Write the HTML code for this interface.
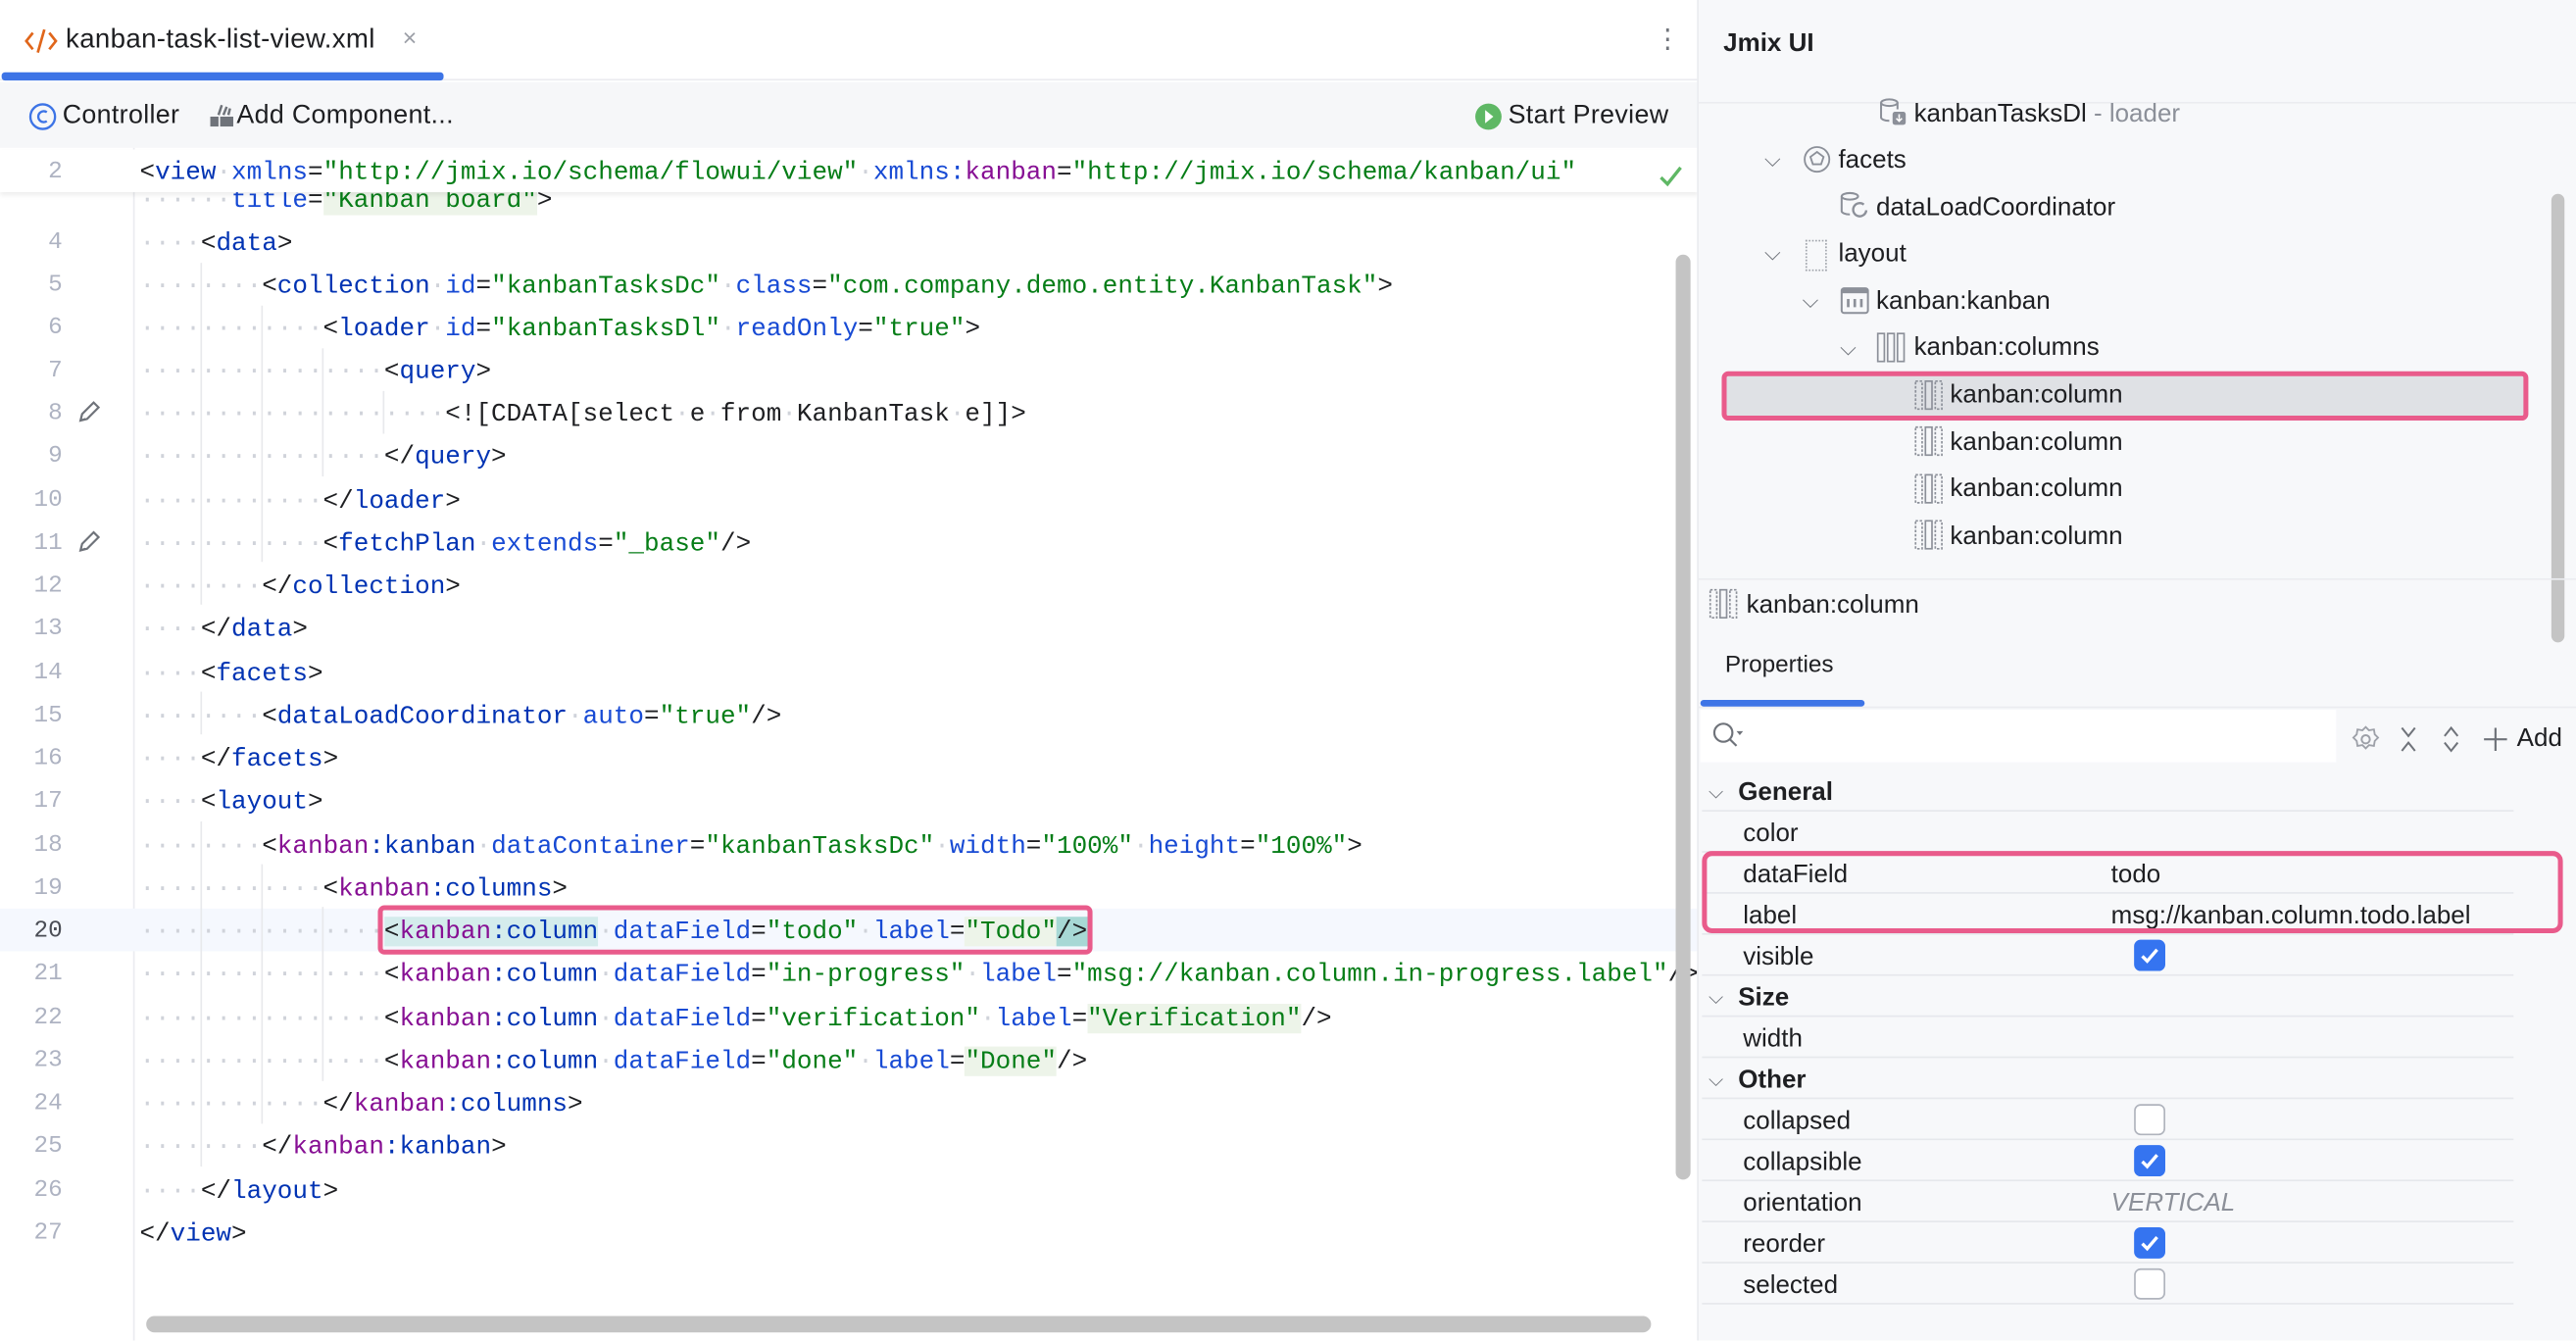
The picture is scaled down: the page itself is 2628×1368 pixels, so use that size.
<!DOCTYPE html>
<html><head><meta charset="utf-8">
<style>
*{box-sizing:border-box;margin:0;padding:0}
html,body{width:2628px;height:1368px;overflow:hidden;background:#fff}
#w{position:absolute;left:0;top:0;width:1568px;height:816px;transform:scale(1.67602);transform-origin:0 0;font-family:"Liberation Sans",sans-serif;color:#1e1f22;background:#fff;overflow:hidden}
.abs{position:absolute}
.code{position:absolute;left:85px;margin-top:2px;font-family:"Liberation Mono",monospace;font-size:15.5px;white-space:pre;line-height:26px;height:26px}
.ln{position:absolute;width:38px;text-align:right;left:0;margin-top:2px;font-family:"Liberation Mono",monospace;font-size:14.5px;color:#aeb3c2;line-height:26px}
.t{color:#0033b3}.a{color:#174ad4}.v{color:#067d17}.n{color:#871094}.d{color:#d0d3da}.k{color:#1e1f22}
.tr{position:absolute;font-size:15.5px;line-height:20px;color:#1e1f22;margin-top:1px}
.pr{position:absolute;left:1036px;width:494px;height:25px;border-bottom:1px solid #e6e8ec;font-size:15.5px;line-height:24px}
.pr .l{position:absolute;left:25px;top:2px}
.pr .r{position:absolute;left:249px;top:2px}
.cb{position:absolute;left:263px;top:3px;width:19px;height:19px;border-radius:4px;border:1px solid #b0b4bd;background:#fff}
.cb.on{background:#3574f0;border-color:#3574f0}
.grp{font-weight:bold}
.chev{position:absolute;left:4px;top:1px;color:#6f737a;font-size:12px}
.guide{position:absolute;width:1px;background:#e8e9ec}
</style></head><body><div id="w">

<!-- Tab bar -->
<div class="abs" style="left:0;top:0;width:1034px;height:49px;background:#fff;border-bottom:1px solid #ebecf0"></div>
<svg class="abs" style="left:14px;top:16px" width="22" height="18" viewBox="0 0 22 18"><path d="M6 4L2 9l4 5M16 4l4 5-4 5M13 2L9 16" fill="none" stroke="#e0661b" stroke-width="1.6"/></svg>
<div class="abs" style="left:40px;top:15px;font-size:16.5px;letter-spacing:0.2px">kanban-task-list-view.xml</div>
<div class="abs" style="left:245px;top:15px;font-size:15px;color:#9da0a8">×</div>
<div class="abs" style="left:1007px;top:14px;font-size:16px;color:#6f737a">⋮</div>
<div class="abs" style="left:1px;top:44px;width:269px;height:5px;background:#3d74e6;border-radius:2px"></div>

<!-- Toolbar -->
<div class="abs" style="left:0;top:50px;width:1034px;height:40px;background:#f6f7f9"></div>
<svg class="abs" style="left:17px;top:62px" width="18" height="18" viewBox="0 0 18 18"><circle cx="9" cy="9" r="7.5" fill="none" stroke="#3d74e6" stroke-width="1.4"/><path d="M11.5 6.3A3.3 3.3 0 1 0 11.5 11.7" fill="none" stroke="#3d74e6" stroke-width="1.4"/></svg>
<div class="abs" style="left:38px;top:62px;font-size:16px;letter-spacing:0.2px">Controller</div>
<svg class="abs" style="left:127px;top:62px" width="16" height="16" viewBox="0 0 16 16"><rect x="1" y="9" width="5" height="6" fill="#6f737a"/><rect x="7" y="9" width="8" height="6" fill="#6f737a"/><path d="M6 8l2-6M9 8l2-5M12 8l1-4" stroke="#6f737a" stroke-width="1.5"/></svg>
<div class="abs" style="left:144px;top:62px;font-size:16px;letter-spacing:0.2px">Add Component...</div>
<svg class="abs" style="left:897px;top:62px" width="18" height="18" viewBox="0 0 18 18"><circle cx="9" cy="9" r="8" fill="#5fb865"/><path d="M7 5l5 4-5 4z" fill="#fff"/></svg>
<div class="abs" style="left:918px;top:62px;font-size:16px;letter-spacing:0.2px">Start Preview</div>

<!-- Gutter -->
<div class="abs" style="left:81px;top:90px;width:1px;height:726px;background:#ebecf0"></div>
<div class="abs" style="left:0;top:553px;width:1034px;height:26px;background:#f5f8fe"></div>

<!-- indent guides -->
<div class="guide" style="left:122px;top:160px;height:208px"></div>
<div class="guide" style="left:159px;top:186px;height:156px"></div>
<div class="guide" style="left:196px;top:212px;height:78px"></div>
<div class="guide" style="left:233px;top:238px;height:26px"></div>
<div class="guide" style="left:122px;top:421px;height:26px"></div>
<div class="guide" style="left:122px;top:500px;height:210px"></div>
<div class="guide" style="left:159px;top:526px;height:158px"></div>
<div class="guide" style="left:196px;top:552px;height:106px"></div>

<!-- line numbers -->
<div class="ln" style="top:133px">4</div>
<div class="ln" style="top:159px">5</div>
<div class="ln" style="top:185px">6</div>
<div class="ln" style="top:211px">7</div>
<div class="ln" style="top:237px">8</div>
<div class="ln" style="top:263px">9</div>
<div class="ln" style="top:290px">10</div>
<div class="ln" style="top:316px">11</div>
<div class="ln" style="top:342px">12</div>
<div class="ln" style="top:368px">13</div>
<div class="ln" style="top:395px">14</div>
<div class="ln" style="top:421px">15</div>
<div class="ln" style="top:447px">16</div>
<div class="ln" style="top:473px">17</div>
<div class="ln" style="top:500px">18</div>
<div class="ln" style="top:526px">19</div>
<div class="ln" style="top:552px;color:#4a4d55">20</div>
<div class="ln" style="top:578px">21</div>
<div class="ln" style="top:605px">22</div>
<div class="ln" style="top:631px">23</div>
<div class="ln" style="top:657px">24</div>
<div class="ln" style="top:683px">25</div>
<div class="ln" style="top:710px">26</div>
<div class="ln" style="top:736px">27</div>
<svg class="abs" style="left:46px;top:243px" width="16" height="16" viewBox="0 0 16 16"><path d="M3 13l1-4 7-7 3 3-7 7zM3 13l3-1" fill="none" stroke="#6f737a" stroke-width="1.3"/></svg>
<svg class="abs" style="left:46px;top:322px" width="16" height="16" viewBox="0 0 16 16"><path d="M3 13l1-4 7-7 3 3-7 7zM3 13l3-1" fill="none" stroke="#6f737a" stroke-width="1.3"/></svg>

<!-- code -->
<div class="code" style="top:107px"><span class="d">······</span><span class="a">title</span>=<span class="v" style="background:#edf4e9">"Kanban board"</span>&gt;</div>
<div class="code" style="top:133px"><span class="d">····</span>&lt;<span class="t">data</span>&gt;</div>
<div class="code" style="top:159px"><span class="d">········</span>&lt;<span class="t">collection</span><span class="d">·</span><span class="a">id</span>=<span class="v">"kanbanTasksDc"</span><span class="d">·</span><span class="a">class</span>=<span class="v">"com.company.demo.entity.KanbanTask"</span>&gt;</div>
<div class="code" style="top:185px"><span class="d">············</span>&lt;<span class="t">loader</span><span class="d">·</span><span class="a">id</span>=<span class="v">"kanbanTasksDl"</span><span class="d">·</span><span class="a">readOnly</span>=<span class="v">"true"</span>&gt;</div>
<div class="code" style="top:211px"><span class="d">················</span>&lt;<span class="t">query</span>&gt;</div>
<div class="code" style="top:237px"><span class="d">····················</span>&lt;![CDATA[select<span class="d">·</span>e<span class="d">·</span>from<span class="d">·</span>KanbanTask<span class="d">·</span>e]]&gt;</div>
<div class="code" style="top:263px"><span class="d">················</span>&lt;/<span class="t">query</span>&gt;</div>
<div class="code" style="top:290px"><span class="d">············</span>&lt;/<span class="t">loader</span>&gt;</div>
<div class="code" style="top:316px"><span class="d">············</span>&lt;<span class="t">fetchPlan</span><span class="d">·</span><span class="a">extends</span>=<span class="v">"_base"</span>/&gt;</div>
<div class="code" style="top:342px"><span class="d">········</span>&lt;/<span class="t">collection</span>&gt;</div>
<div class="code" style="top:368px"><span class="d">····</span>&lt;/<span class="t">data</span>&gt;</div>
<div class="code" style="top:395px"><span class="d">····</span>&lt;<span class="t">facets</span>&gt;</div>
<div class="code" style="top:421px"><span class="d">········</span>&lt;<span class="t">dataLoadCoordinator</span><span class="d">·</span><span class="a">auto</span>=<span class="v">"true"</span>/&gt;</div>
<div class="code" style="top:447px"><span class="d">····</span>&lt;/<span class="t">facets</span>&gt;</div>
<div class="code" style="top:473px"><span class="d">····</span>&lt;<span class="t">layout</span>&gt;</div>
<div class="code" style="top:500px"><span class="d">········</span>&lt;<span class="n">kanban</span><span class="t">:kanban</span><span class="d">·</span><span class="a">dataContainer</span>=<span class="v">"kanbanTasksDc"</span><span class="d">·</span><span class="a">width</span>=<span class="v">"100%"</span><span class="d">·</span><span class="a">height</span>=<span class="v">"100%"</span>&gt;</div>
<div class="code" style="top:526px"><span class="d">············</span>&lt;<span class="n">kanban</span><span class="t">:columns</span>&gt;</div>
<div class="code" style="top:552px"><span class="d">················</span><span style="background:#d4ecec">&lt;<span class="n">kanban</span><span class="t">:column</span></span><span class="d">·</span><span class="a">dataField</span>=<span class="v">"todo"</span><span class="d">·</span><span class="a">label</span>=<span class="v" style="background:#edf4e9">"Todo"</span><span style="background:#a7d8d5">/&gt;</span></div>
<div class="code" style="top:578px"><span class="d">················</span>&lt;<span class="n">kanban</span><span class="t">:column</span><span class="d">·</span><span class="a">dataField</span>=<span class="v">"in-progress"</span><span class="d">·</span><span class="a">label</span>=<span class="v">"msg://kanban.column.in-progress.label"</span>/&gt;</div>
<div class="code" style="top:605px"><span class="d">················</span>&lt;<span class="n">kanban</span><span class="t">:column</span><span class="d">·</span><span class="a">dataField</span>=<span class="v">"verification"</span><span class="d">·</span><span class="a">label</span>=<span class="v" style="background:#edf4e9">"Verification"</span>/&gt;</div>
<div class="code" style="top:631px"><span class="d">················</span>&lt;<span class="n">kanban</span><span class="t">:column</span><span class="d">·</span><span class="a">dataField</span>=<span class="v">"done"</span><span class="d">·</span><span class="a">label</span>=<span class="v" style="background:#edf4e9">"Done"</span>/&gt;</div>
<div class="code" style="top:657px"><span class="d">············</span>&lt;/<span class="n">kanban</span><span class="t">:columns</span>&gt;</div>
<div class="code" style="top:683px"><span class="d">········</span>&lt;/<span class="n">kanban</span><span class="t">:kanban</span>&gt;</div>
<div class="code" style="top:710px"><span class="d">····</span>&lt;/<span class="t">layout</span>&gt;</div>
<div class="code" style="top:736px">&lt;/<span class="t">view</span>&gt;</div>
<div class="abs" style="left:230px;top:551px;width:435px;height:30px;border:3px solid #e95b8b;border-radius:4px"></div>

<!-- sticky line 2 -->
<div class="abs" style="left:0;top:91px;width:1034px;height:26px;background:#fff;box-shadow:0 2px 3px rgba(0,0,0,0.08)"></div>
<div class="ln" style="top:90px">2</div>
<div class="code" style="top:90px">&lt;<span class="t">view</span><span class="d">·</span><span class="a">xmlns</span>=<span class="v">"http://jmix.io/schema/flowui/view"</span><span class="d">·</span><span class="a">xmlns:</span><span class="n">kanban</span>=<span class="v">"http://jmix.io/schema/kanban/ui"</span></div>
<svg class="abs" style="left:1009px;top:99px" width="16" height="16" viewBox="0 0 16 16"><path d="M2 9l4 4 8-10" fill="none" stroke="#5fb865" stroke-width="2"/></svg>

<!-- scrollbars -->
<div class="abs" style="left:1020px;top:155px;width:9px;height:563px;background:#c4c4c4;border-radius:5px"></div>
<div class="abs" style="left:89px;top:801px;width:916px;height:10px;background:#c4c4c4;border-radius:5px"></div>

<!-- Right panel -->
<div class="abs" style="left:1033px;top:0;width:535px;height:816px;background:#f7f8fa;border-left:1px solid #ebecf0"></div>
<div class="abs" style="left:1049px;top:18px;font-size:15.5px;font-weight:bold">Jmix UI</div>
<div class="abs" style="left:1034px;top:62px;width:534px;height:1px;background:#ebecf0"></div>

<div class="abs" style="left:1048px;top:226px;width:491px;height:30px;background:#dfe1e5;border:3px solid #e95b8b;border-radius:4px"></div>

<svg class="abs" style="left:1143px;top:59px" width="18" height="18" viewBox="0 0 18 18"><ellipse cx="7" cy="3.5" rx="5" ry="2" fill="none" stroke="#8c9099" stroke-width="1.2"/><path d="M2 3.5v9c0 1 2 2 5 2M12 3.5v4" fill="none" stroke="#8c9099" stroke-width="1.2"/><rect x="9" y="9" width="8" height="8" rx="1.5" fill="#8c9099"/><path d="M13 10.5v4M11.3 13l1.7 1.7 1.7-1.7" stroke="#fff" stroke-width="1"/></svg>
<div class="tr" style="left:1165px;top:59px">kanbanTasksDl <span style="color:#8c9099">- loader</span></div>
<div class="tr" style="left:1074px;top:86px;color:#6f737a;font-size:13px">⌵</div>
<svg class="abs" style="left:1097px;top:88px" width="18" height="18" viewBox="0 0 18 18"><circle cx="9" cy="9" r="7.5" fill="none" stroke="#8c9099" stroke-width="1.1"/><path d="M9 4.5l4 3-1.5 4.5h-5L5 7.5z" fill="none" stroke="#8c9099" stroke-width="1.1"/></svg>
<div class="tr" style="left:1119px;top:87px">facets</div>
<svg class="abs" style="left:1119px;top:116px" width="20" height="18" viewBox="0 0 20 18"><ellipse cx="7" cy="3.5" rx="5" ry="2" fill="none" stroke="#8c9099" stroke-width="1.2"/><path d="M2 3.5v9c0 1 2 2 5 2" fill="none" stroke="#8c9099" stroke-width="1.2"/><path d="M17 12a4 4 0 1 1-1.5-3.5" fill="none" stroke="#8c9099" stroke-width="1.4"/></svg>
<div class="tr" style="left:1142px;top:116px">dataLoadCoordinator</div>
<div class="tr" style="left:1074px;top:143px;color:#6f737a;font-size:13px">⌵</div>
<div class="abs" style="left:1099px;top:146px;width:13px;height:19px;border:1.5px dotted #a0a4ab"></div>
<div class="tr" style="left:1119px;top:144px">layout</div>
<div class="tr" style="left:1097px;top:172px;color:#6f737a;font-size:13px">⌵</div>
<svg class="abs" style="left:1120px;top:174px" width="18" height="18" viewBox="0 0 18 18"><rect x="1" y="1.5" width="16" height="15" rx="1.5" fill="none" stroke="#8c9099" stroke-width="1.2"/><rect x="1" y="1.5" width="16" height="3" fill="#8c9099"/><path d="M5 8v5M9 8v5M13 8v5" stroke="#8c9099" stroke-width="1.6"/></svg>
<div class="tr" style="left:1142px;top:173px">kanban:kanban</div>
<div class="tr" style="left:1120px;top:201px;color:#6f737a;font-size:13px">⌵</div>
<svg class="abs" style="left:1142px;top:202px" width="18" height="19" viewBox="0 0 18 19"><rect x="1" y="1" width="4" height="17" fill="none" stroke="#8c9099"/><rect x="7" y="1" width="4" height="17" fill="none" stroke="#8c9099"/><rect x="13" y="1" width="4" height="17" fill="none" stroke="#8c9099"/></svg>
<div class="tr" style="left:1165px;top:201px">kanban:columns</div>
<svg class="abs" style="left:1165px;top:231px" width="18" height="19" viewBox="0 0 18 19"><rect x="1" y="1" width="4" height="17" fill="none" stroke="#8c9099" stroke-dasharray="1.5 1"/><rect x="7" y="1" width="4" height="17" fill="none" stroke="#8c9099"/><rect x="13" y="1" width="4" height="17" fill="none" stroke="#8c9099" stroke-dasharray="1.5 1"/></svg>
<div class="tr" style="left:1187px;top:230px">kanban:column</div>
<svg class="abs" style="left:1165px;top:259px" width="18" height="19" viewBox="0 0 18 19"><rect x="1" y="1" width="4" height="17" fill="none" stroke="#8c9099" stroke-dasharray="1.5 1"/><rect x="7" y="1" width="4" height="17" fill="none" stroke="#8c9099"/><rect x="13" y="1" width="4" height="17" fill="none" stroke="#8c9099" stroke-dasharray="1.5 1"/></svg>
<div class="tr" style="left:1187px;top:259px">kanban:column</div>
<svg class="abs" style="left:1165px;top:288px" width="18" height="19" viewBox="0 0 18 19"><rect x="1" y="1" width="4" height="17" fill="none" stroke="#8c9099" stroke-dasharray="1.5 1"/><rect x="7" y="1" width="4" height="17" fill="none" stroke="#8c9099"/><rect x="13" y="1" width="4" height="17" fill="none" stroke="#8c9099" stroke-dasharray="1.5 1"/></svg>
<div class="tr" style="left:1187px;top:287px">kanban:column</div>
<svg class="abs" style="left:1165px;top:316px" width="18" height="19" viewBox="0 0 18 19"><rect x="1" y="1" width="4" height="17" fill="none" stroke="#8c9099" stroke-dasharray="1.5 1"/><rect x="7" y="1" width="4" height="17" fill="none" stroke="#8c9099"/><rect x="13" y="1" width="4" height="17" fill="none" stroke="#8c9099" stroke-dasharray="1.5 1"/></svg>
<div class="tr" style="left:1187px;top:316px">kanban:column</div>
<div class="abs" style="left:1553px;top:118px;width:8px;height:273px;background:#c4c4c4;border-radius:4px"></div>

<div class="abs" style="left:1034px;top:352px;width:534px;height:1px;background:#ebecf0"></div>
<svg class="abs" style="left:1040px;top:358px" width="18" height="19" viewBox="0 0 18 19"><rect x="1" y="1" width="4" height="17" fill="none" stroke="#8c9099" stroke-dasharray="1.5 1"/><rect x="7" y="1" width="4" height="17" fill="none" stroke="#8c9099"/><rect x="13" y="1" width="4" height="17" fill="none" stroke="#8c9099" stroke-dasharray="1.5 1"/></svg>
<div class="tr" style="left:1063px;top:358px">kanban:column</div>
<div class="abs" style="left:1050px;top:397px;font-size:14.5px">Properties</div>
<div class="abs" style="left:1034px;top:430px;width:534px;height:1px;background:#ebecf0"></div>
<div class="abs" style="left:1035px;top:426px;width:100px;height:4px;background:#3d74e6;border-radius:2px"></div>

<!-- search row -->
<div class="abs" style="left:1035px;top:432px;width:387px;height:32px;background:#fff"></div>
<svg class="abs" style="left:1041px;top:438px" width="22" height="20" viewBox="0 0 22 20"><circle cx="8" cy="8" r="5.5" fill="none" stroke="#6f737a" stroke-width="1.3"/><path d="M12 12l4 4" stroke="#6f737a" stroke-width="1.3"/><path d="M16 7h4l-2 2.5z" fill="#6f737a"/></svg>
<svg class="abs" style="left:1431px;top:441px" width="18" height="18" viewBox="0 0 18 18"><circle cx="9" cy="9" r="2.5" fill="none" stroke="#9da0a8" stroke-width="1.2"/><path d="M9 1.5l2 2 3-.5.5 3 2 2-2 2-.5 3-3-.5-2 2-2-2-3 .5-.5-3-2-2 2-2 .5-3 3 .5z" fill="none" stroke="#9da0a8" stroke-width="1.1"/></svg>
<svg class="abs" style="left:1459px;top:441px" width="14" height="18" viewBox="0 0 14 18"><path d="M3 2l4 5 4-5M3 16l4-5 4 5" fill="none" stroke="#6f737a" stroke-width="1.2"/></svg>
<svg class="abs" style="left:1485px;top:441px" width="14" height="18" viewBox="0 0 14 18"><path d="M3 7l4-5 4 5M3 11l4 5 4-5" fill="none" stroke="#6f737a" stroke-width="1.2"/></svg>
<svg class="abs" style="left:1510px;top:441px" width="18" height="18" viewBox="0 0 18 18"><path d="M9 2v14M2 9h14" stroke="#6f737a" stroke-width="1.3"/></svg>
<div class="abs" style="left:1532px;top:441px;font-size:15.5px">Add</div>

<!-- properties -->
<div class="pr" style="top:469px"><span class="chev">⌵</span><span class="l grp" style="left:22px">General</span></div>
<div class="pr" style="top:494px"><span class="l">color</span></div>
<div class="pr" style="top:519px"><span class="l">dataField</span><span class="r">todo</span></div>
<div class="pr" style="top:544px"><span class="l">label</span><span class="r">msg://kanban.column.todo.label</span></div>
<div class="pr" style="top:569px"><span class="l">visible</span><span class="cb on"><svg width="17" height="17" viewBox="0 0 17 17" style="position:absolute;left:0;top:0"><path d="M4 9l3 3 6-7" fill="none" stroke="#fff" stroke-width="2"/></svg></span></div>
<div class="pr" style="top:594px"><span class="chev">⌵</span><span class="l grp" style="left:22px">Size</span></div>
<div class="pr" style="top:619px"><span class="l">width</span></div>
<div class="pr" style="top:644px"><span class="chev">⌵</span><span class="l grp" style="left:22px">Other</span></div>
<div class="pr" style="top:669px"><span class="l">collapsed</span><span class="cb"></span></div>
<div class="pr" style="top:694px"><span class="l">collapsible</span><span class="cb on"><svg width="17" height="17" viewBox="0 0 17 17" style="position:absolute;left:0;top:0"><path d="M4 9l3 3 6-7" fill="none" stroke="#fff" stroke-width="2"/></svg></span></div>
<div class="pr" style="top:719px"><span class="l">orientation</span><span class="r" style="font-style:italic;color:#8c9099">VERTICAL</span></div>
<div class="pr" style="top:744px"><span class="l">reorder</span><span class="cb on"><svg width="17" height="17" viewBox="0 0 17 17" style="position:absolute;left:0;top:0"><path d="M4 9l3 3 6-7" fill="none" stroke="#fff" stroke-width="2"/></svg></span></div>
<div class="pr" style="top:769px"><span class="l">selected</span><span class="cb"></span></div>
<div class="abs" style="left:1036px;top:518px;width:524px;height:50px;border:3px solid #e95b8b;border-radius:6px"></div>

</div></body></html>
